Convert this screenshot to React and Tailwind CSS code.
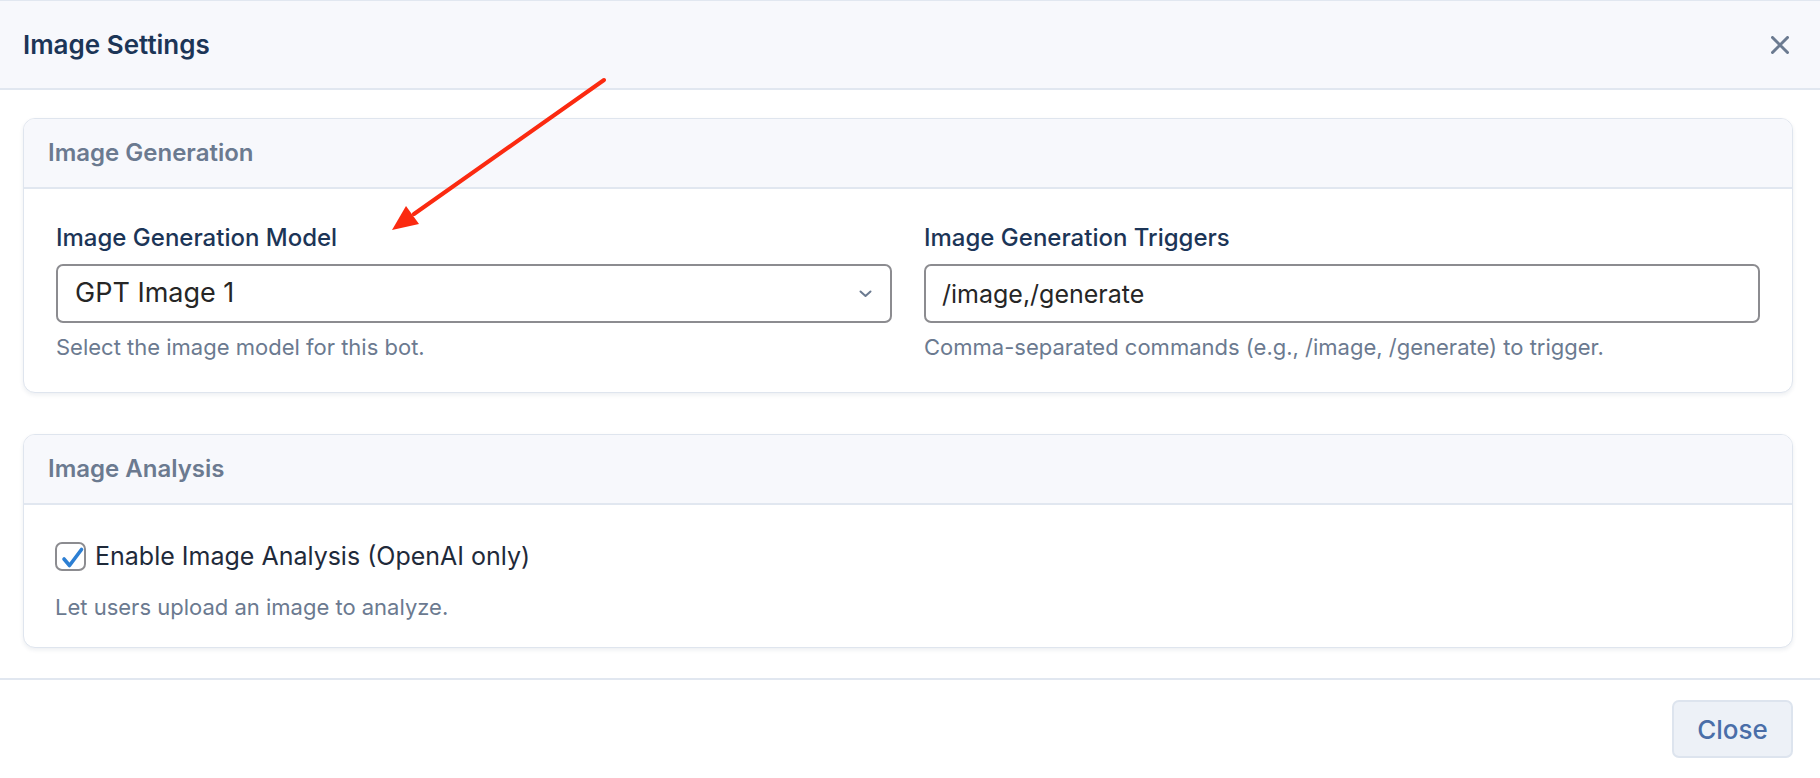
import React, { useState } from 'react';

function CheckBox({ checked, onChange }) {
  return (
    <button
      type="button"
      onClick={onChange}
      className="relative w-[31px] h-[29px] shrink-0 rounded-[7px] border-2 border-[#8c8c90] bg-white"
    >
      {checked && (
        <svg className="absolute left-[2px] top-[2px]" width="26" height="24" viewBox="0 0 26 24">
          <path d="M5 13 L10.5 19.5 L22.5 3.5" fill="none" stroke="#2d7fd3" strokeWidth="3.6" strokeLinecap="round" strokeLinejoin="round" />
        </svg>
      )}
    </button>
  );
}

function Card({ title, children, bodyClass }) {
  return (
    <div className="rounded-[12px] border border-[#dfe5ee] bg-white shadow-[0_2px_4px_rgba(30,50,90,0.08)] overflow-hidden">
      <div className="h-[70px] flex items-center px-[24px] bg-[#f7f8fc] border-b-2 border-[#e1e7f0]">
        <h3 className="text-[24px] font-semibold text-[#6b7a90]">{title}</h3>
      </div>
      <div className={bodyClass}>{children}</div>
    </div>
  );
}

export default function App() {
  const [model, setModel] = useState('gpt-image-1');
  const [triggers, setTriggers] = useState('/image,/generate');
  const [analysis, setAnalysis] = useState(true);

  return (
    <div className="relative w-full h-[778px] bg-white font-['Inter',sans-serif] overflow-hidden">
      {/* header */}
      <div className="h-[90px] flex items-center justify-between pl-[23px] pr-[28px] bg-[#f7f8fc] border-t border-b-2 border-[#e1e7f0]">
        <h2 className="text-[26px] font-semibold text-[#1c3557]">Image Settings</h2>
        <button type="button" className="w-[24px] h-[24px] flex items-center justify-center">
          <svg width="18" height="18" viewBox="0 0 18 18">
            <path d="M1.5 1.5 L16.5 16.5 M16.5 1.5 L1.5 16.5" stroke="#6b7a90" strokeWidth="3" strokeLinecap="round" />
          </svg>
        </button>
      </div>

      {/* body */}
      <div className="pl-[23px] pr-[27px] pt-[28px] pb-[30px] flex flex-col gap-[41px]">
        <Card title="Image Generation" bodyClass="px-[32px] pt-[35px] pb-[32px] grid grid-cols-2 gap-x-[32px]">
          <div className="flex flex-col">
            <label className="text-[24px] leading-[28px] font-medium text-[#1c3557]">Image Generation Model</label>
            <div className="relative mt-[12px]">
              <select
                value={model}
                onChange={(e) => setModel(e.target.value)}
                className="appearance-none w-full h-[59px] rounded-[7px] border-2 border-[#8c8c90] bg-white pl-[17px] pr-[40px] text-[27px] text-[#262626] outline-none"
              >
                <option value="gpt-image-1">GPT Image 1</option>
                <option value="dall-e-3">DALL·E 3</option>
              </select>
              <svg className="absolute right-[20px] top-[26px] pointer-events-none" width="13" height="8" viewBox="0 0 13 8">
                <path d="M1.5 1.5 L6.5 6 L11.5 1.5" fill="none" stroke="#6b7a90" strokeWidth="2" strokeLinecap="round" strokeLinejoin="round" />
              </svg>
            </div>
            <p className="mt-[11px] text-[22px] leading-[26px] text-[#6b7a90]">Select the image model for this bot.</p>
          </div>
          <div className="flex flex-col">
            <label className="text-[24px] leading-[28px] font-medium text-[#1c3557]">Image Generation Triggers</label>
            <input
              type="text"
              value={triggers}
              onChange={(e) => setTriggers(e.target.value)}
              className="mt-[12px] w-full h-[59px] rounded-[7px] border-2 border-[#8c8c90] bg-white px-[16px] text-[25px] text-[#262626] outline-none"
            />
            <p className="mt-[11px] text-[22px] leading-[26px] text-[#6b7a90]">Comma-separated commands (e.g., /image, /generate) to trigger.</p>
          </div>
        </Card>

        <Card title="Image Analysis" bodyClass="px-[31px] pt-[37px] pb-[27px]">
          <label className="flex items-center gap-[9px] cursor-pointer">
            <CheckBox checked={analysis} onChange={() => setAnalysis(!analysis)} />
            <span className="text-[25px] leading-[29px] text-[#1f2a3a]">Enable Image Analysis (OpenAI only)</span>
          </label>
          <p className="mt-[23px] text-[22px] leading-[26px] text-[#6b7a90]">Let users upload an image to analyze.</p>
        </Card>
      </div>

      {/* footer */}
      <div className="border-t-2 border-[#e1e7f0] flex justify-end pr-[27px] pt-[20px]">
        <button type="button" className="w-[121px] h-[58px] rounded-[7px] border-2 border-[#dde4ee] bg-[#edf1f7] text-[26px] font-medium text-[#4a6ea8]">
          Close
        </button>
      </div>

      {/* annotation arrow */}
      <svg className="absolute inset-0 pointer-events-none" width="1820" height="778">
        <line x1="604" y1="80" x2="414" y2="214" stroke="#fb2a10" strokeWidth="4" strokeLinecap="round" />
        <polygon points="392,230 419,224 406,206" fill="#fb2a10" />
      </svg>
    </div>
  );
}
